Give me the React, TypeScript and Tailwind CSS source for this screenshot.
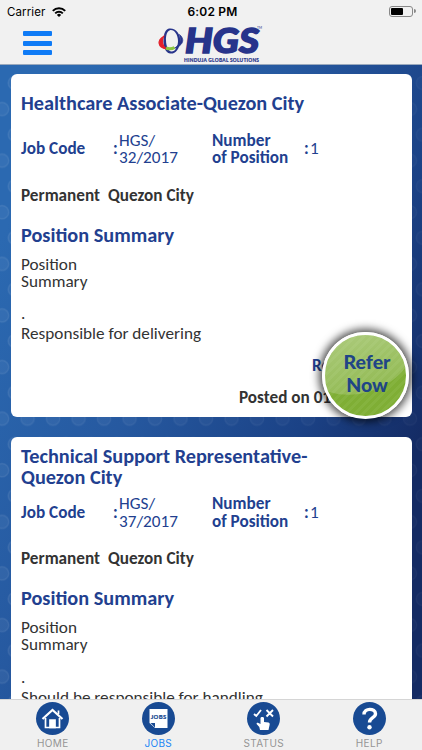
import React from "react";

type Job = { id: string; title: string[]; code: string; summary: string; posted?: string };

const jobs: Job[] = [
  {
    id: "a",
    title: ["Healthcare Associate-Quezon City"],
    code: "32/2017",
    summary: "Responsible for delivering",
    posted: "Posted on 01-2017",
  },
  {
    id: "b",
    title: ["Technical Support Representative-", "Quezon City"],
    code: "37/2017",
    summary: "Should be responsible for handling",
  },
];

function Backdrop() {
  return (
    <svg className="absolute inset-0 h-full w-full" aria-hidden="true">
      <defs>
        <linearGradient id="shade" gradientUnits="userSpaceOnUse" x1="0" y1="240" x2="422" y2="440">
          <stop offset="0" stopColor="#2b69b1" />
          <stop offset="0.4" stopColor="#2659a0" />
          <stop offset="0.75" stopColor="#1b4286" />
          <stop offset="1" stopColor="#142b64" />
        </linearGradient>
        <pattern id="dots" patternUnits="userSpaceOnUse" x="-10.7" y="31.4" width="25.5" height="51.6">
          <g fill="#fff" fillOpacity="0.05" stroke="#fff" strokeOpacity="0.07" strokeWidth="1.4">
            <circle cx="12.75" cy="26" r="6.7" />
            <circle cx="0" cy="0" r="6.7" />
            <circle cx="25.5" cy="0" r="6.7" />
            <circle cx="0" cy="51.6" r="6.7" />
            <circle cx="25.5" cy="51.6" r="6.7" />
          </g>
        </pattern>
        <linearGradient id="fade" x1="0" x2="1">
          <stop offset="0" stopColor="#fff" />
          <stop offset="1" stopColor="#666" />
        </linearGradient>
        <mask id="dim">
          <rect width="422" height="750" fill="url(#fade)" />
        </mask>
      </defs>
      <rect width="422" height="750" fill="url(#shade)" />
      <rect y="76" width="422" height="674" fill="url(#dots)" mask="url(#dim)" />
    </svg>
  );
}

function StatusBar() {
  return (
    <div className="grid h-[22px] grid-cols-3 items-center pr-[6px] pl-[7px] font-['Inter',sans-serif] text-[11px] text-black">
      <div className="flex items-center gap-[7px] pt-px">
        <span className="text-[11.5px] leading-[16px] tracking-[0.1px]">Carrier</span>
        <svg width="14" height="10" viewBox="0 0 14 10" fill="none" stroke="#000" strokeWidth="2">
          <path d="M.8 3.9a8.8 8.8 0 0 1 12.4 0" />
          <path d="M3.2 6.4a5.4 5.4 0 0 1 7.6 0" />
          <path d="M7 10 4.9 7.9a3 3 0 0 1 4.2 0Z" fill="#000" stroke="none" />
        </svg>
      </div>
      <span className="pt-px pl-[2px] text-center text-[12px] leading-[16px] font-semibold tracking-[0.2px]">6:02 PM</span>
      <div className="flex items-center justify-end gap-px">
        <span className="flex h-[11px] w-[24px] rounded-[3px] border border-[#888] p-px">
          <span className="h-full w-[12px] rounded-[1px] bg-black" />
        </span>
        <span className="h-[4px] w-[1.5px] rounded-r bg-[#888]" />
      </div>
    </div>
  );
}

function Logo() {
  return (
    <svg width="106" height="42" viewBox="0 0 106 42" className="overflow-visible" aria-label="HGS">
      <path
        fillRule="evenodd"
        fill="#27348b"
        d="M12 4.500C18.500 3.500 24 10 23.200 18 22.500 25 18 30.500 13 29.500 8 28.500 6 22 6.500 15 6.800 9.500 8.500 5.200 12 4.500ZM13 6.200C10 7 8.800 11.500 9 16.500 9.200 22.500 11.300 27.300 14.500 27.600 18 27.900 21 22.500 21 17 21 10.500 17 5.300 13 6.200Z"
      />
      <path d="M22.500 10.500C29 16 25 22 17 24.500c5-3 8-7 5.500-14Z" fill="#27348b" stroke="#27348b" strokeWidth="0.800" />
      <path d="M6.500 12.500C0 16.500 .5 23.500 9.500 25 5.500 22 4 18 6.500 12.500Z" fill="#e3202b" stroke="#e3202b" strokeWidth="1.200" />
      <path d="M9 24c3 1.200 6 1 8.500-.5" fill="none" stroke="#8cc63f" strokeWidth="3" />
      <text x="28" y="29.400" textLength="74" lengthAdjust="spacingAndGlyphs" fontFamily="Lato, sans-serif" fontWeight="900" fontStyle="italic" fontSize="34" fill="#27348b" stroke="#27348b" strokeWidth="1.500">HGS</text>
      <text x="27" y="37.600" textLength="75" lengthAdjust="spacing" fontFamily="Lato, sans-serif" fontWeight="900" fontSize="4.800" fill="#27348b" stroke="#27348b" strokeWidth="0.150">HINDUJA GLOBAL SOLUTIONS</text>
      <text x="100" y="4.500" textLength="5" lengthAdjust="spacingAndGlyphs" fontFamily="Lato, sans-serif" fontSize="3.500" fill="#27348b">TM</text>
    </svg>
  );
}

function Header() {
  return (
    <header className="relative h-[65px] shrink-0 border-b border-[#9aa9bd] bg-[#f1f1f1]">
      <StatusBar />
      <div className="flex h-[42px] items-start">
        <button aria-label="Menu" className="mt-[9px] ml-[23px] flex w-[29px] flex-col gap-[4.5px]">
          <span className="h-[5px] rounded-[1px] bg-[#0f7bf6]" />
          <span className="h-[5px] rounded-[1px] bg-[#0f7bf6]" />
          <span className="h-[5px] rounded-[1px] bg-[#0f7bf6]" />
        </button>
        <div className="mt-[2px] ml-[105px]">
          <Logo />
        </div>
      </div>
    </header>
  );
}

function JobCard({ job }: { job: Job }) {
  return (
    <article className="flex h-[343px] shrink-0 flex-col rounded-[6px] bg-white pl-[10.5px] whitespace-nowrap text-[#333]">
      <h2 className="mt-[9px] flex h-[41px] flex-col justify-center text-[20.3px] leading-[20.5px] font-bold text-[#223f8f]">
        {job.title.map((t) => (
          <span key={t}>{t}</span>
        ))}
      </h2>
      <div className="mt-[8px] flex h-[35px] items-center text-[17.2px] leading-[17.3px] text-[#223f8f]">
        <b className="w-[92px]">Job Code</b>
        <b className="w-[6px]">:</b>
        <span className="w-[93px]">
          HGS/
          <br />
          {job.code}
        </span>
        <b className="w-[92px]">
          Number
          <br />
          of Position
        </b>
        <b className="w-[6px]">:</b>
        <span>1</span>
      </div>
      <div className="mt-[20px] flex h-[18px] gap-[8px] text-[17.2px] leading-[18px] font-bold">
        <span>Permanent</span>
        <span>Quezon City</span>
      </div>
      <h3 className="mt-[19px] h-[22px] text-[20.3px] leading-[22px] font-bold text-[#223f8f]">Position Summary</h3>
      <p className="mt-[10px] text-[17.2px] leading-[17.3px]">
        Position
        <br />
        Summary
      </p>
      <p className="mt-[14px] text-[17.2px] leading-[20px]">
        .<br />
        {job.summary}
      </p>
      {job.posted && (
        <div className="mt-[13px] pl-[218px] text-[17.2px] font-bold">
          <p className="pl-[73px] leading-[18px] text-[#223f8f]">Read More</p>
          <p className="mt-[14px] leading-[18px]">{job.posted}</p>
        </div>
      )}
    </article>
  );
}

function ReferButton() {
  return (
    <button className="absolute top-[332px] left-[322px] flex h-[87px] w-[87px] items-center justify-center overflow-hidden rounded-full border-[3px] border-white bg-[repeating-linear-gradient(135deg,#7fae35_0px,#7fae35_3px,#85b33e_3px,#85b33e_6px)] pb-[6px] pl-[3px] shadow-[0_0_9px_3px_rgba(0,0,0,0.7)]">
      <span className="absolute -top-[22px] -left-[22px] h-[80px] w-[112px] -rotate-[18deg] rounded-[50%] bg-gradient-to-b from-white/40 to-white/15" />
      <span className="relative text-center font-['Lato',sans-serif] text-[19.5px] leading-[23px] font-black text-[#204587]">
        Refer
        <br />
        Now
      </span>
    </button>
  );
}

function Disc({ children }: { children: React.ReactNode }) {
  return (
    <svg width="33" height="33" viewBox="0 0 33 33">
      <circle cx="16.500" cy="16.500" r="16.500" fill="#184a93" />
      {children}
    </svg>
  );
}

function TabBar() {
  const tabs = [
    {
      label: "HOME",
      icon: (
        <g fill="none" stroke="#fff" strokeWidth="1.700">
          <path d="M6.500 17 16.500 8l10 9" strokeWidth="2.200" />
          <path d="M9.500 16v9.500h14V16M22.500 12V8.500" />
          <path d="M14 25.500V18h5v7.500z" fill="#fff" />
        </g>
      ),
    },
    {
      label: "JOBS",
      icon: (
        <g>
          <path d="M7.500 7h18v19H13l-5.500-5z" fill="#fff" />
          <path d="M8.500 21H13v4.500z" fill="#184a93" />
          <path d="M8 20.500h5.500V26" fill="none" stroke="#fff" />
          <text x="8.700" y="17" textLength="15.800" lengthAdjust="spacingAndGlyphs" fontFamily="Lato, sans-serif" fontWeight="900" fontSize="6.300" fill="#184a93" stroke="#184a93" strokeWidth="0.200">JOBS</text>
        </g>
      ),
    },
    {
      label: "STATUS",
      icon: (
        <g>
          <path d="m7 12 2.300 2L14 8M19.500 8l6.500 6.500M26 8l-6.500 6.500" fill="none" stroke="#fff" strokeWidth="1.900" />
          <path d="M13.500 16c0-1.500 3.500-1.500 3.500 0v4l4.500.6q1.500.3 1.200 2L21.500 28h-8.500l-.7-3-2.500-2.800c-.8-1.200.6-2 1.600-1.200L13.500 22z" fill="#fff" />
        </g>
      ),
    },
    {
      label: "HELP",
      icon: (
        <g>
          <path d="M11 12.500c0-7 11.500-6.500 11.500-.7 0 4.200-6 3.700-6 8.700" fill="none" stroke="#fff" strokeWidth="3.400" />
          <circle cx="16.500" cy="25.300" r="2.200" fill="#fff" />
        </g>
      ),
    },
  ];
  return (
    <nav className="absolute inset-x-0 bottom-0 grid h-[51px] grid-cols-4 border-t border-[#d5d5d5] bg-[#f0f0f0]">
      {tabs.map((tab) => (
        <div
          key={tab.label}
          className={`flex flex-col items-center pt-[2px] font-['Inter',sans-serif] text-[10px] leading-[16px] tracking-[0.35px] ${tab.label === "JOBS" ? "text-[#2187f5]" : "text-[#959595]"}`}
        >
          <Disc>{tab.icon}</Disc>
          <span>{tab.label}</span>
        </div>
      ))}
    </nav>
  );
}

export default function App() {
  return (
    <div className="relative flex h-[750px] w-[422px] flex-col overflow-hidden bg-[#235496] font-['Carlito','Lato',sans-serif]">
      <Backdrop />
      <Header />
      <main className="relative flex flex-1 flex-col gap-[20.5px] overflow-hidden px-[10.5px] pt-[8.5px]">
        {jobs.map((job) => (
          <JobCard key={job.id} job={job} />
        ))}
      </main>
      <ReferButton />
      <TabBar />
    </div>
  );
}
